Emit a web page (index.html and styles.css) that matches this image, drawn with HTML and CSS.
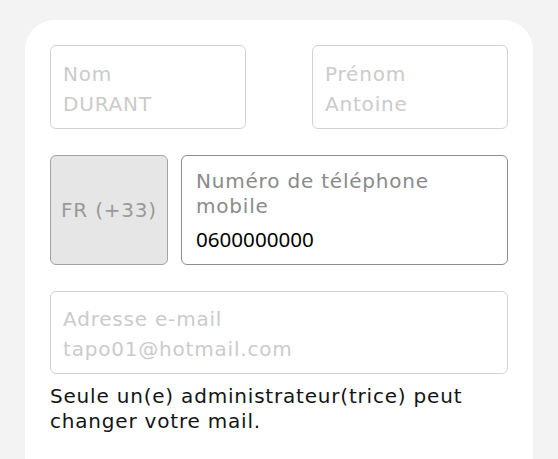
FILE: index.html
```html
<!DOCTYPE html>
<html lang="fr">
<head>
<meta charset="utf-8">
<link rel="stylesheet" href="styles.css">
</head>
<body>
<div class="card">
  <div class="row-two">
    <div class="field">
      <div class="label">Nom</div>
      <div class="value">DURANT</div>
    </div>
    <div class="field">
      <div class="label">Prénom</div>
      <div class="value">Antoine</div>
    </div>
  </div>
  <div class="row-phone">
    <div class="country">FR (+33)</div>
    <div class="phone">
      <div class="phone-label">Numéro de téléphone mobile</div>
      <div class="phone-value">0600000000</div>
    </div>
  </div>
  <div class="field field-wide">
    <div class="label">Adresse e-mail</div>
    <div class="value">tapo01@hotmail.com</div>
  </div>
  <p class="help">Seule un(e) administrateur(trice) peut changer votre mail.</p>
</div>
</body>
</html>
```

FILE: styles.css
```css
html, body {
  margin: 0;
  padding: 0;
  background: #f3f3f3;
}
body {
  font-family: "DejaVu Sans", "Open Sans", sans-serif;
  font-size: 20px;
  letter-spacing: 0.8px;
  overflow: hidden;
  height: 459px;
}
.card {
  margin: 20px 0 0 25px;
  width: 508px;
  box-sizing: border-box;
  height: 439px;
  padding: 25px;
  background: #ffffff;
  border-radius: 30px 30px 0 0;
  display: flex;
  flex-direction: column;
}
.row-two {
  display: flex;
  justify-content: space-between;
}
.row-two .field {
  width: 196px;
}
.field {
  box-sizing: border-box;
  height: 84px;
  border: 1px solid #d2d2d2;
  border-radius: 6px;
  padding: 13px 12px 9px;
  color: #cbcbcb;
  line-height: 30px;
}
.field-wide {
  margin-top: 26px;
  padding-top: 12px;
}
.row-phone {
  display: flex;
  gap: 13px;
  margin-top: 26px;
  height: 111px;
}
.country {
  box-sizing: border-box;
  width: 118px;
  border: 1px solid #a3a3a3;
  border-radius: 6px;
  background: #e6e6e6;
  color: #999999;
  display: flex;
  align-items: center;
  justify-content: center;
}
.phone {
  flex: 1;
  box-sizing: border-box;
  border: 1px solid #8e8e8e;
  border-radius: 6px;
  padding: 13px 12px 10px 14px;
}
.phone-label {
  color: #8a8a8a;
  line-height: 25px;
}
.phone-value {
  margin-top: 5px;
  font-family: "Noto Sans", "Open Sans", sans-serif;
  font-size: 20.6px;
  letter-spacing: 0;
  color: #000000;
  line-height: 30px;
}
.help {
  margin: 10px 0 0;
  color: #141414;
  line-height: 25px;
  width: 440px;
}
```
